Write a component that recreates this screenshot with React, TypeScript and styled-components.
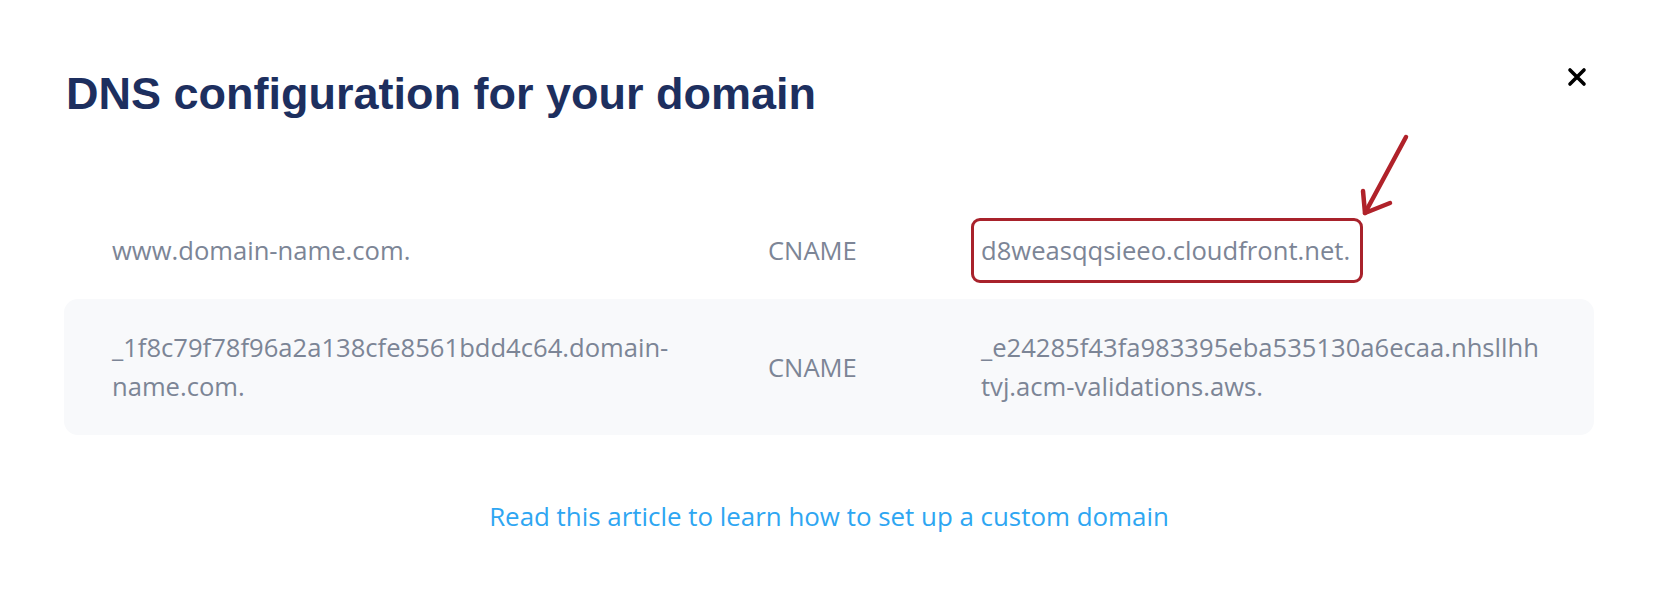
import React from 'react';
import styled, { createGlobalStyle } from 'styled-components';

const GlobalStyle = createGlobalStyle`
  html, body {
    margin: 0;
    padding: 0;
    background: #ffffff;
  }
`;

const Page = styled.div`
  position: relative;
  width: 1657px;
  height: 597px;
  box-sizing: border-box;
  padding: 0 63px 0 64px;
  background: #ffffff;
`;

const Header = styled.div`
  display: flex;
  justify-content: space-between;
  align-items: flex-start;
  padding-top: 64px;
`;

const Title = styled.h2`
  margin: 0 0 0 2px;
  font-family: "Liberation Sans", Arial, sans-serif;
  font-weight: 700;
  font-size: 45px;
  line-height: 60px;
  color: #1d2f5f;
`;

const CloseButton = styled.button`
  display: flex;
  align-items: center;
  justify-content: center;
  margin: 2px 6px 0 0;
  padding: 0;
  width: 22px;
  height: 22px;
  border: none;
  background: none;
  cursor: pointer;
`;

const Table = styled.div`
  margin-top: 78px;
  display: flex;
  flex-direction: column;
`;

const Row = styled.div<{ $shaded?: boolean }>`
  display: grid;
  grid-template-columns: 610px 167px 1fr;
  column-gap: 46px;
  align-items: center;
  padding: 29px 47px 29px 48px;
  border-radius: 14px;
  background: ${p => (p.$shaded ? '#f8f9fb' : 'transparent')};
`;

const Cell = styled.div`
  font-family: "Open Sans", Lato, sans-serif;
  font-size: 25.6px;
  line-height: 39px;
  color: #7c8596;
  white-space: nowrap;
`;

const Highlight = styled.span`
  display: inline-block;
  margin: -13px 0 -13px -10px;
  padding: 10px 10px 10px 7px;
  border: 3px solid #a8222b;
  border-radius: 9px;
`;

const Footer = styled.div`
  display: flex;
  justify-content: center;
  margin-top: 64px;
`;

const ArticleLink = styled.a`
  font-family: "Open Sans", Lato, sans-serif;
  font-size: 25.9px;
  line-height: 34px;
  color: #2ea6f2;
  text-decoration: none;
`;

const Arrow = styled.svg`
  position: absolute;
  left: 1352px;
  top: 125px;
  overflow: visible;
`;

const rows = [
  {
    host: <>www.domain-name.com.</>,
    type: 'CNAME',
    value: <Highlight>d8weasqqsieeo.cloudfront.net.</Highlight>,
  },
  {
    host: (
      <>
        _1f8c79f78f96a2a138cfe8561bdd4c64.domain-
        <br />
        name.com.
      </>
    ),
    type: 'CNAME',
    value: (
      <>
        _e24285f43fa983395eba535130a6ecaa.nhsllhh
        <br />
        tvj.acm-validations.aws.
      </>
    ),
  },
];

export default function App() {
  return (
    <>
      <GlobalStyle />
      <Page>
        <Header>
          <Title>DNS configuration for your domain</Title>
          <CloseButton aria-label="Close">
            <svg width="20" height="20" viewBox="0 0 20 20">
              <path d="M3 3 L17 17 M17 3 L3 17" stroke="#000" strokeWidth="3.6" strokeLinecap="round" />
            </svg>
          </CloseButton>
        </Header>

        <Table>
          {rows.map((r, i) => (
            <Row key={i} $shaded={i % 2 === 1}>
              <Cell>{r.host}</Cell>
              <Cell>{r.type}</Cell>
              <Cell>{r.value}</Cell>
            </Row>
          ))}
        </Table>

        <Footer>
          <ArticleLink href="#">Read this article to learn how to set up a custom domain</ArticleLink>
        </Footer>

        <Arrow width="60" height="100" viewBox="0 0 60 100">
          <g stroke="#b0222a" strokeWidth="4.5" strokeLinecap="round" strokeLinejoin="round" fill="none">
            <path d="M54 12 L13 88" />
            <path d="M11 66 L13 88 L38 78" />
          </g>
        </Arrow>
      </Page>
    </>
  );
}
